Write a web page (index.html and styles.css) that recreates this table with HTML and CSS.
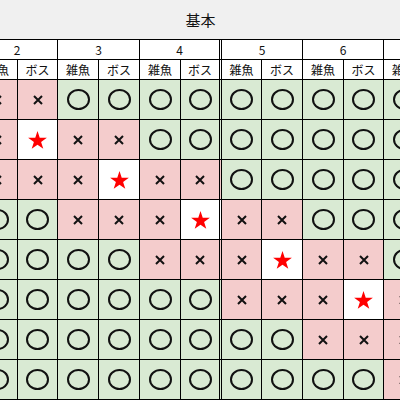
FILE: index.html
```html
<!DOCTYPE html>
<html lang="ja">
<head>
<meta charset="utf-8">
<title>基本</title>
<link rel="stylesheet" href="styles.css">
</head>
<body>
<div class="title">基本</div>
<div class="viewport">
<div class="sheet">
  <div class="h num span2">2</div>
  <div class="h num span2">3</div>
  <div class="h num span2 dbl">4</div>
  <div class="h num span2">5</div>
  <div class="h num span2">6</div>
  <div class="h num span2">7</div>

  <div class="h lab">雑魚</div><div class="h lab">ボス</div>
  <div class="h lab">雑魚</div><div class="h lab">ボス</div>
  <div class="h lab">雑魚</div><div class="h lab dbl">ボス</div>
  <div class="h lab">雑魚</div><div class="h lab">ボス</div>
  <div class="h lab">雑魚</div><div class="h lab">ボス</div>
  <div class="h lab">雑魚</div><div class="h lab">ボス</div>

  <!-- row 1 -->
  <div class="c x"><svg class="ic-x" viewBox="0 0 10 10"><path d="M1 1L9 9M9 1L1 9"/></svg></div>
  <div class="c x"><svg class="ic-x" viewBox="0 0 10 10"><path d="M1 1L9 9M9 1L1 9"/></svg></div>
  <div class="c o"><span class="ring"></span></div>
  <div class="c o"><span class="ring"></span></div>
  <div class="c o"><span class="ring"></span></div>
  <div class="c o dbl"><span class="ring"></span></div>
  <div class="c o"><span class="ring"></span></div>
  <div class="c o"><span class="ring"></span></div>
  <div class="c o"><span class="ring"></span></div>
  <div class="c o"><span class="ring"></span></div>
  <div class="c o"><span class="ring"></span></div>
  <div class="c o"><span class="ring"></span></div>

  <!-- row 2 -->
  <div class="c x"><svg class="ic-x" viewBox="0 0 10 10"><path d="M1 1L9 9M9 1L1 9"/></svg></div>
  <div class="c s"><svg class="ic-s" viewBox="0 0 20 19"><polygon points="10,0 12.35,7.2 19.9,7.2 13.8,11.6 16.1,18.8 10,14.4 3.9,18.8 6.2,11.6 0.1,7.2 7.65,7.2"/></svg></div>
  <div class="c x"><svg class="ic-x" viewBox="0 0 10 10"><path d="M1 1L9 9M9 1L1 9"/></svg></div>
  <div class="c x"><svg class="ic-x" viewBox="0 0 10 10"><path d="M1 1L9 9M9 1L1 9"/></svg></div>
  <div class="c o"><span class="ring"></span></div>
  <div class="c o dbl"><span class="ring"></span></div>
  <div class="c o"><span class="ring"></span></div>
  <div class="c o"><span class="ring"></span></div>
  <div class="c o"><span class="ring"></span></div>
  <div class="c o"><span class="ring"></span></div>
  <div class="c o"><span class="ring"></span></div>
  <div class="c o"><span class="ring"></span></div>

  <!-- row 3 -->
  <div class="c x"><svg class="ic-x" viewBox="0 0 10 10"><path d="M1 1L9 9M9 1L1 9"/></svg></div>
  <div class="c x"><svg class="ic-x" viewBox="0 0 10 10"><path d="M1 1L9 9M9 1L1 9"/></svg></div>
  <div class="c x"><svg class="ic-x" viewBox="0 0 10 10"><path d="M1 1L9 9M9 1L1 9"/></svg></div>
  <div class="c s"><svg class="ic-s" viewBox="0 0 20 19"><polygon points="10,0 12.35,7.2 19.9,7.2 13.8,11.6 16.1,18.8 10,14.4 3.9,18.8 6.2,11.6 0.1,7.2 7.65,7.2"/></svg></div>
  <div class="c x"><svg class="ic-x" viewBox="0 0 10 10"><path d="M1 1L9 9M9 1L1 9"/></svg></div>
  <div class="c x dbl"><svg class="ic-x" viewBox="0 0 10 10"><path d="M1 1L9 9M9 1L1 9"/></svg></div>
  <div class="c o"><span class="ring"></span></div>
  <div class="c o"><span class="ring"></span></div>
  <div class="c o"><span class="ring"></span></div>
  <div class="c o"><span class="ring"></span></div>
  <div class="c o"><span class="ring"></span></div>
  <div class="c o"><span class="ring"></span></div>

  <!-- row 4 -->
  <div class="c o"><span class="ring"></span></div>
  <div class="c o"><span class="ring"></span></div>
  <div class="c x"><svg class="ic-x" viewBox="0 0 10 10"><path d="M1 1L9 9M9 1L1 9"/></svg></div>
  <div class="c x"><svg class="ic-x" viewBox="0 0 10 10"><path d="M1 1L9 9M9 1L1 9"/></svg></div>
  <div class="c x"><svg class="ic-x" viewBox="0 0 10 10"><path d="M1 1L9 9M9 1L1 9"/></svg></div>
  <div class="c s dbl"><svg class="ic-s" viewBox="0 0 20 19"><polygon points="10,0 12.35,7.2 19.9,7.2 13.8,11.6 16.1,18.8 10,14.4 3.9,18.8 6.2,11.6 0.1,7.2 7.65,7.2"/></svg></div>
  <div class="c x"><svg class="ic-x" viewBox="0 0 10 10"><path d="M1 1L9 9M9 1L1 9"/></svg></div>
  <div class="c x"><svg class="ic-x" viewBox="0 0 10 10"><path d="M1 1L9 9M9 1L1 9"/></svg></div>
  <div class="c o"><span class="ring"></span></div>
  <div class="c o"><span class="ring"></span></div>
  <div class="c o"><span class="ring"></span></div>
  <div class="c o"><span class="ring"></span></div>

  <!-- row 5 -->
  <div class="c o"><span class="ring"></span></div>
  <div class="c o"><span class="ring"></span></div>
  <div class="c o"><span class="ring"></span></div>
  <div class="c o"><span class="ring"></span></div>
  <div class="c x"><svg class="ic-x" viewBox="0 0 10 10"><path d="M1 1L9 9M9 1L1 9"/></svg></div>
  <div class="c x dbl"><svg class="ic-x" viewBox="0 0 10 10"><path d="M1 1L9 9M9 1L1 9"/></svg></div>
  <div class="c x"><svg class="ic-x" viewBox="0 0 10 10"><path d="M1 1L9 9M9 1L1 9"/></svg></div>
  <div class="c s"><svg class="ic-s" viewBox="0 0 20 19"><polygon points="10,0 12.35,7.2 19.9,7.2 13.8,11.6 16.1,18.8 10,14.4 3.9,18.8 6.2,11.6 0.1,7.2 7.65,7.2"/></svg></div>
  <div class="c x"><svg class="ic-x" viewBox="0 0 10 10"><path d="M1 1L9 9M9 1L1 9"/></svg></div>
  <div class="c x"><svg class="ic-x" viewBox="0 0 10 10"><path d="M1 1L9 9M9 1L1 9"/></svg></div>
  <div class="c o"><span class="ring"></span></div>
  <div class="c o"><span class="ring"></span></div>

  <!-- row 6 -->
  <div class="c o"><span class="ring"></span></div>
  <div class="c o"><span class="ring"></span></div>
  <div class="c o"><span class="ring"></span></div>
  <div class="c o"><span class="ring"></span></div>
  <div class="c o"><span class="ring"></span></div>
  <div class="c o dbl"><span class="ring"></span></div>
  <div class="c x"><svg class="ic-x" viewBox="0 0 10 10"><path d="M1 1L9 9M9 1L1 9"/></svg></div>
  <div class="c x"><svg class="ic-x" viewBox="0 0 10 10"><path d="M1 1L9 9M9 1L1 9"/></svg></div>
  <div class="c x"><svg class="ic-x" viewBox="0 0 10 10"><path d="M1 1L9 9M9 1L1 9"/></svg></div>
  <div class="c s"><svg class="ic-s" viewBox="0 0 20 19"><polygon points="10,0 12.35,7.2 19.9,7.2 13.8,11.6 16.1,18.8 10,14.4 3.9,18.8 6.2,11.6 0.1,7.2 7.65,7.2"/></svg></div>
  <div class="c x"><svg class="ic-x" viewBox="0 0 10 10"><path d="M1 1L9 9M9 1L1 9"/></svg></div>
  <div class="c x"><svg class="ic-x" viewBox="0 0 10 10"><path d="M1 1L9 9M9 1L1 9"/></svg></div>

  <!-- row 7 -->
  <div class="c o"><span class="ring"></span></div>
  <div class="c o"><span class="ring"></span></div>
  <div class="c o"><span class="ring"></span></div>
  <div class="c o"><span class="ring"></span></div>
  <div class="c o"><span class="ring"></span></div>
  <div class="c o dbl"><span class="ring"></span></div>
  <div class="c o"><span class="ring"></span></div>
  <div class="c o"><span class="ring"></span></div>
  <div class="c x"><svg class="ic-x" viewBox="0 0 10 10"><path d="M1 1L9 9M9 1L1 9"/></svg></div>
  <div class="c x"><svg class="ic-x" viewBox="0 0 10 10"><path d="M1 1L9 9M9 1L1 9"/></svg></div>
  <div class="c x"><svg class="ic-x" viewBox="0 0 10 10"><path d="M1 1L9 9M9 1L1 9"/></svg></div>
  <div class="c x"><svg class="ic-x" viewBox="0 0 10 10"><path d="M1 1L9 9M9 1L1 9"/></svg></div>

  <!-- row 8 -->
  <div class="c o"><span class="ring"></span></div>
  <div class="c o"><span class="ring"></span></div>
  <div class="c o"><span class="ring"></span></div>
  <div class="c o"><span class="ring"></span></div>
  <div class="c o"><span class="ring"></span></div>
  <div class="c o dbl"><span class="ring"></span></div>
  <div class="c o"><span class="ring"></span></div>
  <div class="c o"><span class="ring"></span></div>
  <div class="c o"><span class="ring"></span></div>
  <div class="c o"><span class="ring"></span></div>
  <div class="c x"><svg class="ic-x" viewBox="0 0 10 10"><path d="M1 1L9 9M9 1L1 9"/></svg></div>
  <div class="c x"><svg class="ic-x" viewBox="0 0 10 10"><path d="M1 1L9 9M9 1L1 9"/></svg></div>
</div>
</div>
</body>
</html>
```

FILE: styles.css
```css
html, body {
  margin: 0;
  padding: 0;
  background: #ffffff;
  width: 400px;
  height: 400px;
  overflow: hidden;
  font-family: "Noto Sans CJK JP", "Noto Sans", sans-serif;
  color: #111;
}

.title {
  height: 39px;
  background: #f0f0f0;
  display: flex;
  align-items: center;
  justify-content: center;
  font-size: 15px;
  padding-left: 1px;
  box-sizing: border-box;
}

.viewport {
  width: 400px;
  overflow: hidden;
}

.sheet {
  display: grid;
  grid-template-columns: 41px 40px 41px 41px 41px 41px 40px 41px 41px 40px 41px 41px;
  grid-auto-rows: 40px;
  grid-template-rows: 20px 20px;
  margin-left: -23px;
  width: 489px;
  border-top: 1px solid #000;
}

.h, .c {
  box-sizing: border-box;
  border-right: 1px solid #000;
  border-bottom: 1px solid #000;
  display: flex;
  align-items: center;
  justify-content: center;
}

.h {
  font-size: 12px;
  line-height: 1;
  background: #fff;
  padding-top: 1px;
}

.span2 {
  grid-column: span 2;
}

.dbl {
  border-right: 3px double #000;
}

.c.o { background: #d9ead3; }
.c.x { background: #f4cccc; }
.c.s { background: #ffffff; }

.ring {
  width: 23px;
  height: 21px;
  box-sizing: border-box;
  border: 2px solid #111;
  border-radius: 50%;
}

.ic-x {
  width: 10px;
  height: 10px;
  fill: none;
  stroke: #111;
  stroke-width: 2;
}

.ic-s {
  width: 19px;
  height: 18px;
  fill: #ff0000;
}
```
